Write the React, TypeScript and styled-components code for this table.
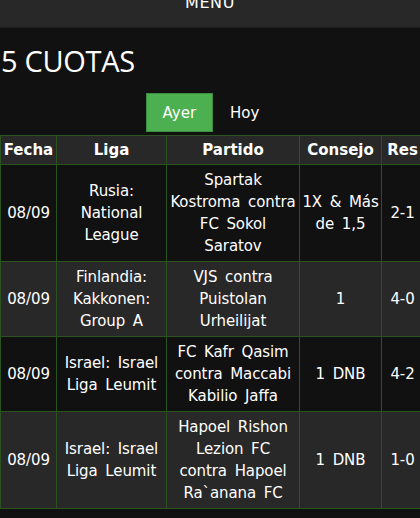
import React, { useState } from "react";
import styled, { createGlobalStyle } from "styled-components";

const Global = createGlobalStyle`
  html, body { margin: 0; padding: 0; background: #111111; }
  body { font-family: "DejaVu Sans", Verdana, sans-serif; color: #ffffff; overflow: hidden; }
`;

const Page = styled.div`
  width: 420px;
  overflow: hidden;
`;

const MenuBar = styled.div`
  height: 27px;
  background: #282828;
  border-bottom: 1px solid #1c1c1c;
  display: flex;
  justify-content: center;
  align-items: flex-start;
  overflow: hidden;
`;

const MenuText = styled.span`
  font-size: 16px;
  line-height: 16px;
  margin-top: -5px;
  letter-spacing: 0.6px;
`;

const Title = styled.h1`
  margin: 18px 0 0 1px;
  font-family: "Open Sans", "DejaVu Sans", sans-serif;
  font-weight: 400;
  font-size: 29px;
  line-height: 30px;
  letter-spacing: -0.3px;
`;

const Tabs = styled.div`
  display: flex;
  justify-content: center;
  margin-top: 17px;
  padding-left: 2px;
`;

const Tab = styled.button<{ $active?: boolean }>`
  font-family: "DejaVu Sans", sans-serif;
  font-size: 15px;
  color: #ffffff;
  background: ${(p) => (p.$active ? "#4caf50" : "transparent")};
  border: 1px solid ${(p) => (p.$active ? "#3e8e41" : "transparent")};
  height: 39px;
  padding: 0 16px;
  cursor: pointer;
`;

const TableWrap = styled.div`
  margin-top: 3px;
  overflow: hidden;
`;

const Table = styled.table`
  border-collapse: collapse;
  width: 423px;
  table-layout: fixed;
  font-size: 15px;
  line-height: 22px;
`;

const Th = styled.th<{ $w: number }>`
  box-sizing: border-box;
  width: ${(p) => p.$w}px;
  background: #282828;
  border: 1px solid #2b5320;
  font-weight: bold;
  font-size: 15px;
  padding: 3px 1px 3px;
  text-align: center;
  white-space: nowrap;
`;

const Tr = styled.tr<{ $alt: boolean }>`
  background: ${(p) => (p.$alt ? "#282828" : "#111111")};
`;

const Td = styled.td`
  border: 1px solid #2b5320;
  padding: 4px 2px;
  text-align: center;
  vertical-align: middle;
  letter-spacing: -0.1px;
  word-spacing: 3px;
`;

const rows = [
  ["08/09", "Rusia: National League", "Spartak Kostroma contra FC Sokol Saratov", "1X & Más de 1,5", "2-1"],
  ["08/09", "Finlandia: Kakkonen: Group A", "VJS contra Puistolan Urheilijat", "1", "4-0"],
  ["08/09", "Israel: Israel Liga Leumit", "FC Kafr Qasim contra Maccabi Kabilio Jaffa", "1 DNB", "4-2"],
  ["08/09", "Israel: Israel Liga Leumit", "Hapoel Rishon Lezion FC contra Hapoel Ra`anana FC", "1 DNB", "1-0"],
];

const cols: [string, number][] = [
  ["Fecha", 56],
  ["Liga", 110],
  ["Partido", 133],
  ["Consejo", 82],
  ["Res", 42],
];

export default function App() {
  const [tab, setTab] = useState("Ayer");
  return (
    <Page>
      <Global />
      <MenuBar>
        <MenuText>MENU</MenuText>
      </MenuBar>
      <Title>5 CUOTAS</Title>
      <Tabs>
        {["Ayer", "Hoy"].map((t) => (
          <Tab key={t} $active={tab === t} onClick={() => setTab(t)}>
            {t}
          </Tab>
        ))}
      </Tabs>
      <TableWrap>
        <Table>
          <thead>
            <tr>
              {cols.map(([c, w]) => (
                <Th key={c} $w={w}>
                  {c}
                </Th>
              ))}
            </tr>
          </thead>
          <tbody>
            {rows.map((r, i) => (
              <Tr key={i} $alt={i % 2 === 1}>
                {r.map((c, j) => (
                  <Td key={j}>{c}</Td>
                ))}
              </Tr>
            ))}
          </tbody>
        </Table>
      </TableWrap>
    </Page>
  );
}
